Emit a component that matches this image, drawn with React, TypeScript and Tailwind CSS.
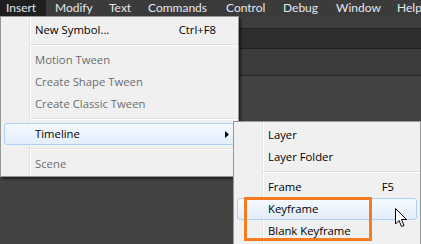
import React from 'react';

const font = { fontFamily: '"Open Sans", "Noto Sans", sans-serif' };

type Item =
  | { sep: true }
  | { label: string; shortcut?: string; disabled?: boolean; active?: boolean; sub?: boolean };

const mainItems: Item[] = [
  { label: 'New Symbol...', shortcut: 'Ctrl+F8' },
  { sep: true },
  { label: 'Motion Tween', disabled: true },
  { label: 'Create Shape Tween', disabled: true },
  { label: 'Create Classic Tween', disabled: true },
  { sep: true },
  { label: 'Timeline', active: true, sub: true },
  { sep: true },
  { label: 'Scene', disabled: true },
];

const subItems: Item[] = [
  { label: 'Layer' },
  { label: 'Layer Folder' },
  { sep: true },
  { label: 'Frame', shortcut: 'F5' },
  { label: 'Keyframe', active: true },
  { label: 'Blank Keyframe' },
];

// menubar items: width, left padding
const bar: [string, string][] = [
  ['Insert', 'w-[46px] pl-[6px] bg-[#1f1f1f]'],
  ['Modify', 'w-[54px] pl-[9px]'],
  ['Text', 'w-[39px] pl-[9px]'],
  ['Commands', 'w-[78px] pl-[9px]'],
  ['Control', 'w-[57px] pl-[9px]'],
  ['Debug', 'w-[53px] pl-[9px]'],
  ['Window', 'w-[61px] pl-[9px]'],
  ['Help', 'w-[33px] pl-[9px]'],
];

const gutter =
  'bg-[linear-gradient(to_right,#f0f0f0_28px,#e2e3e3_28px,#e2e3e3_29px,#ffffff_29px,#ffffff_30px,#f0f0f0_30px)]';

function MenuRows({ items, shortcutPad }: { items: Item[]; shortcutPad: string }) {
  return (
    <div className="flex flex-col">
      {items.map((it, i) =>
        'sep' in it ? (
          <div key={i} className="h-[8px] flex flex-col justify-center pl-[29px]">
            <div className="h-px bg-[#e0e0e0]" />
            <div className="h-px bg-white" />
          </div>
        ) : (
          <div
            key={i}
            className={`mx-[3px] h-[22px] flex items-center rounded-[3px] border ${
              it.active
                ? 'border-[#aecff7] bg-gradient-to-b from-[#f4f9fe] to-[#e3eefb]'
                : 'border-transparent'
            }`}
          >
            <span
              className={`flex-1 pl-[30px] text-[11.3px] ${it.disabled ? 'text-[#6d6d6d]' : 'text-black'}`}
            >
              {it.label}
            </span>
            {it.shortcut && <span className={`text-[11.3px] text-black ${shortcutPad}`}>{it.shortcut}</span>}
            {it.sub && (
              <svg className="mr-[5px]" width="4" height="7" viewBox="0 0 4 7">
                <path d="M0 0 L4 3.5 L0 7 Z" fill="#000" />
              </svg>
            )}
          </div>
        ),
      )}
    </div>
  );
}

export default function App() {
  return (
    <div className="relative w-[421px] h-[244px] overflow-hidden bg-[#434343]" style={font}>
      {/* Menu bar */}
      <div className="h-[16px] bg-[#3b3b3b] flex items-stretch whitespace-nowrap">
        {bar.map(([b, cls]) => (
          <div
            key={b}
            className={`shrink-0 flex items-center text-[12px] text-[#e4e8ef] ${cls}`}
            style={{ fontFamily: 'Lato, "Open Sans", sans-serif' }}
          >
            {b}
          </div>
        ))}
      </div>

      {/* Workspace bands */}
      <div className="h-[12px] bg-[#3e3e3e]" />
      <div className="h-px bg-[#232323]" />
      <div className="h-[19px] bg-[#2e2e2e]" />
      <div className="h-px bg-[#1f1f1f]" />
      <div className="h-[26px] bg-[#3c3c3c]" />
      <div className="h-px bg-[#262626]" />

      {/* Insert menu */}
      <div
        className={`absolute left-0 top-[16px] w-[239px] h-[161px] border border-[#979797] pt-[2px] shadow-[2px_2px_2px_rgba(0,0,0,0.5)] ${gutter}`}
      >
        <MenuRows items={mainItems} shortcutPad="pr-[18px]" />
      </div>

      {/* Timeline submenu */}
      <div className={`absolute left-[233px] top-[121px] w-[188px] h-[130px] border border-[#979797] pt-[2px] ${gutter}`}>
        <MenuRows items={subItems} shortcutPad="pr-[22px]" />
      </div>

      {/* Orange highlight */}
      <div className="absolute left-[244px] top-[197px] w-[128px] h-[44px] border-[3px] border-[#f47b20]" />

      {/* Cursor */}
      <svg className="absolute left-[395px] top-[208px]" width="13" height="20" viewBox="0 0 13 20">
        <path
          d="M0.5 0.5 L0.5 16 L4 12.5 L6.5 18.5 L9 17.5 L6.5 11.5 L11.5 11.5 Z"
          fill="#fff"
          stroke="#000"
          strokeWidth="1"
          strokeLinejoin="round"
        />
      </svg>
    </div>
  );
}
